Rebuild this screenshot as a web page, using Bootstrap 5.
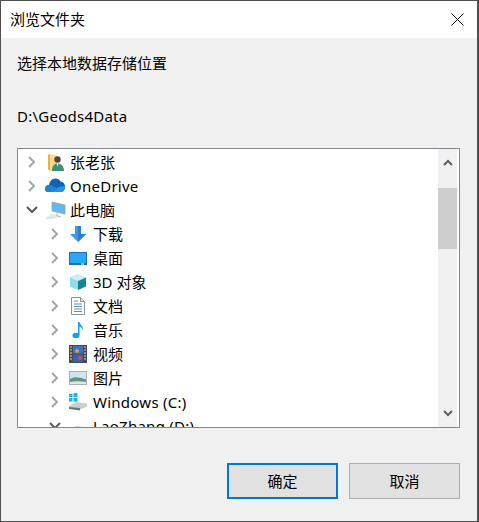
<!DOCTYPE html>
<html lang="zh-CN">
<head>
    <meta charset="UTF-8">
    <title>浏览文件夹</title>
    <link href="https://cdn.jsdelivr.net/npm/bootstrap@5.3.0/dist/css/bootstrap.min.css" rel="stylesheet">
    <style>
        html, body { height: 522px; overflow: hidden; }
        body { font-family: "Noto Sans", "Noto Sans CJK SC", sans-serif; font-size: 15px; color: #000; background: #f0f0f0; }
        .dlg-window { width: 479px; height: 522px; background: #f0f0f0; border: 1px solid #4f4f4f; border-right-width: 2px; }
        .dlg-title { height: 37px; background: #fff; padding-left: 9px; line-height: 36px; }
        .dlg-close { width: 32px; height: 37px; margin-right: 4px; }
        .dlg-caption { margin: 15px 0 0 16px; height: 20px; line-height: 20px; }
        .dlg-path { margin: 33px 0 0 16px; height: 20px; line-height: 20px; }
        .latin-text { letter-spacing: .25px; }
        .tree-box { margin: 22px 0 0 16px; width: 443px; height: 280px; border: 1px solid #828790; background: #fff; }
        .tree-list { height: 278px; overflow: hidden; padding-top: 1px; }
        .tree-row { height: 24px; line-height: 24px; white-space: nowrap; }
        .tree-sub { padding-left: 23px; }
        .tree-arrow { width: 29px; flex: none; padding-left: 8px; }
        .tree-icon { width: 18px; height: 18px; flex: none; margin-left: -1px; margin-right: 6px; overflow: visible; }
        .tree-scroll { width: 21px; flex: none; padding-right: 2px; }
        .tree-track { width: 19px; height: 100%; background: #f0f0f0; }
        .tree-btn { height: 19px; }
        .tree-gap { height: 16px; }
        .tree-thumb { height: 61px; background: #cdcdcd; }
        .dlg-actions { margin: 35px 0 0 226px; gap: 11px; }
        .dlg-btn { width: 111px; height: 36px; padding: 0; font-size: 15px; color: #000; background: #e1e1e1; border: 1px solid #adadad; border-radius: 0; }
        .dlg-btn-main { border: 2px solid #0078d7; }
    </style>
</head>
<body>
    <svg width="0" height="0" class="position-absolute">
        <symbol id="arrow-r" viewBox="0 0 10 12"><path d="M3 1l5 5-5 5" fill="none" stroke="#a6a6a6" stroke-width="2"/></symbol>
        <symbol id="arrow-d" viewBox="0 0 12 10"><path d="M1 2l5 5 5-5" fill="none" stroke="#595959" stroke-width="2"/></symbol>
    </svg>

    <div class="dlg-window">
        <!-- Title bar -->
        <div class="dlg-title d-flex justify-content-between">
            <span>浏览文件夹</span>
            <div class="dlg-close d-flex align-items-center justify-content-center">
                <svg width="13" height="13" viewBox="0 0 13 13"><path d="M.5.5l12 12M12.5.5l-12 12" stroke="#000" stroke-width="1" fill="none"/></svg>
            </div>
        </div>

        <div class="dlg-caption">选择本地数据存储位置</div>
        <div class="dlg-path latin-text">D:\Geods4Data</div>

        <!-- Folder tree -->
        <div class="tree-box d-flex">
            <div class="tree-list flex-grow-1">
                <div class="tree-row d-flex align-items-center">
                    <span class="tree-arrow d-flex"><svg width="10" height="12"><use href="#arrow-r"/></svg></span>
                    <svg class="tree-icon" viewBox="0 0 18 18"><path d="M2 1l9 1.500V18H4l-2-2z" fill="#f6d98a"/><path d="M2 1l2 1v16l-2-2z" fill="#e3b34a"/><circle cx="11.500" cy="6.500" r="3.200" fill="#5b4030"/><path d="M6 18c0-5 2-7.500 5.500-7.500S18 13 18 18z" fill="#3f9270"/><path d="M10.500 10.500h2l-1 3z" fill="#fff"/></svg>
                    <span>张老张</span>
                </div>
                <div class="tree-row d-flex align-items-center">
                    <span class="tree-arrow d-flex"><svg width="10" height="12"><use href="#arrow-r"/></svg></span>
                    <svg class="tree-icon" viewBox="0 0 18 18"><path d="M2 15C0 15-1 13.300-1 11.700-1 9.500.7 8 3 8c.6-3.700 3.200-6.500 6.500-6.500 2.300 0 4 1.200 5 3 2.700.2 4.500 2.200 4.500 5 0 3.500-1.500 5.500-4 5.500z" fill="#0f62b5"/><path d="M2 15C0 15-1 13.300-1 11.700-1 9.500.7 8 3 8c3 0 5 1 7 3l4 4z" fill="#1b86d8"/><path d="M7 15l4-4c2.500-1.800 5.500-2 8-1.500 0 3.500-1.500 5.500-4 5.500z" fill="#1f97e6"/></svg>
                    <span class="latin-text">OneDrive</span>
                </div>
                <div class="tree-row d-flex align-items-center">
                    <span class="tree-arrow d-flex"><svg width="12" height="10"><use href="#arrow-d"/></svg></span>
                    <svg class="tree-icon" viewBox="0 0 18 18"><path d="M6 1l13 3v9L6 10z" fill="#62b9ee" stroke="#8fa3b3" stroke-width=".8"/><path d="M-1 18l6-5 9 1.500-6 3.500z" fill="#e3e6e8"/><path d="M11 12v3l4 1" fill="none" stroke="#b5bcc2"/></svg>
                    <span>此电脑</span>
                </div>
                <div class="tree-row tree-sub d-flex align-items-center">
                    <span class="tree-arrow d-flex"><svg width="10" height="12"><use href="#arrow-r"/></svg></span>
                    <svg class="tree-icon" viewBox="0 0 18 18"><path d="M6 1h6v8h5l-8 8-8-8h5z" fill="#3f97e6"/><path d="M9 1h3v8h5l-8 8z" fill="#2a7fd0"/></svg>
                    <span>下载</span>
                </div>
                <div class="tree-row tree-sub d-flex align-items-center">
                    <span class="tree-arrow d-flex"><svg width="10" height="12"><use href="#arrow-r"/></svg></span>
                    <svg class="tree-icon" viewBox="0 0 18 18"><rect x="0" y="3" width="18" height="13" fill="#1b6fb8"/><rect x="1" y="4" width="16" height="10" fill="#29a8f2"/><rect x="12" y="14.500" width="3" height="1" fill="#fff"/></svg>
                    <span>桌面</span>
                </div>
                <div class="tree-row tree-sub d-flex align-items-center">
                    <span class="tree-arrow d-flex"><svg width="10" height="12"><use href="#arrow-r"/></svg></span>
                    <svg class="tree-icon" viewBox="0 0 18 18"><path d="M9 1L1 4.500v9L9 17z" fill="#8fdde8"/><path d="M1 4.500L9 8l8-3.500L9 1z" fill="#c9f1f5"/><path d="M9 8v9l8-3.500v-9z" fill="#17839c"/></svg>
                    <span>3D 对象</span>
                </div>
                <div class="tree-row tree-sub d-flex align-items-center">
                    <span class="tree-arrow d-flex"><svg width="10" height="12"><use href="#arrow-r"/></svg></span>
                    <svg class="tree-icon" viewBox="0 0 18 18"><path d="M2.500.5h9l4 4v13h-13z" fill="#fff" stroke="#8a9299"/><path d="M11.500.5v4h4" fill="#dfe4e8" stroke="#8a9299"/><path d="M5 4h4M5 7h8M5 9.500h8M5 12h8M5 14.500h8" stroke="#5c8fb3"/></svg>
                    <span>文档</span>
                </div>
                <div class="tree-row tree-sub d-flex align-items-center">
                    <span class="tree-arrow d-flex"><svg width="10" height="12"><use href="#arrow-r"/></svg></span>
                    <svg class="tree-icon" viewBox="0 0 18 18"><ellipse cx="7" cy="14.500" rx="3.500" ry="2.800" fill="#1c9be8"/><path d="M9 1h1.500c.5 3 4 4 3.500 8-.7-2-2-3-3.500-3.500V14H9z" fill="#1c9be8"/></svg>
                    <span>音乐</span>
                </div>
                <div class="tree-row tree-sub d-flex align-items-center">
                    <span class="tree-arrow d-flex"><svg width="10" height="12"><use href="#arrow-r"/></svg></span>
                    <svg class="tree-icon" viewBox="0 0 18 18"><rect width="18" height="18" fill="#4a4a4a"/><rect x="4" y="1" width="10" height="7.500" fill="#3d6fc4"/><rect x="4" y="9.500" width="10" height="7.500" fill="#2f62b8"/><circle cx="8" cy="6" r="2" fill="#e0a030"/><circle cx="11" cy="13" r="2" fill="#d0503a"/><path d="M1.500 2h1M1.500 5h1M1.500 8h1M1.500 11h1M1.500 14h1M15.500 2h1M15.500 5h1M15.500 8h1M15.500 11h1M15.500 14h1" stroke="#fff" stroke-width="1.500"/></svg>
                    <span>视频</span>
                </div>
                <div class="tree-row tree-sub d-flex align-items-center">
                    <span class="tree-arrow d-flex"><svg width="10" height="12"><use href="#arrow-r"/></svg></span>
                    <svg class="tree-icon" viewBox="0 0 18 18"><rect y="2" width="18" height="14" fill="#a9b0b5"/><rect x="1" y="3" width="16" height="12" fill="#cfe4f2"/><path d="M1 10c4-2.500 8-2 16 .5V15H1z" fill="#5f9488"/><path d="M1 13c5-1 10-1 16 0v2H1z" fill="#e0ead8"/></svg>
                    <span>图片</span>
                </div>
                <div class="tree-row tree-sub d-flex align-items-center">
                    <span class="tree-arrow d-flex"><svg width="10" height="12"><use href="#arrow-r"/></svg></span>
                    <svg class="tree-icon" viewBox="0 0 18 18"><path d="M0 1l3.500-.5V4H0zM4.500.3L8.500 0v4h-4zM0 5h3.500v3.500H0zM4.500 5h4v3.800l-4-.3z" fill="#19b4ee"/><path d="M0 13l7-4 11 1.500v3l-7 3-11-1z" fill="#c9ced2"/><path d="M0 14l11 1v2.500L0 16z" fill="#6e7478"/></svg>
                    <span class="latin-text">Windows (C:)</span>
                </div>
                <div class="tree-row tree-sub d-flex align-items-center">
                    <span class="tree-arrow d-flex"><svg width="12" height="10"><use href="#arrow-d"/></svg></span>
                    <svg class="tree-icon" viewBox="0 0 18 18"><path d="M0 13l7-4 11 1.500v3l-7 3-11-1z" fill="#c9ced2"/></svg>
                    <span class="latin-text">LaoZhang (D:)</span>
                </div>
            </div>
            <div class="tree-scroll">
                <div class="tree-track d-flex flex-column">
                    <div class="tree-btn d-flex align-items-center justify-content-center mt-1"><svg width="10" height="7" viewBox="0 0 10 7"><path d="M1 6l4-4 4 4" fill="none" stroke="#606060" stroke-width="2"/></svg></div>
                    <div class="tree-gap"></div>
                    <div class="tree-thumb"></div>
                    <div class="flex-grow-1"></div>
                    <div class="tree-btn d-flex align-items-center justify-content-center mb-1"><svg width="10" height="7" viewBox="0 0 10 7"><path d="M1 1l4 4 4-4" fill="none" stroke="#606060" stroke-width="2"/></svg></div>
                </div>
            </div>
        </div>

        <!-- Buttons -->
        <div class="dlg-actions d-flex">
            <button type="button" class="btn dlg-btn dlg-btn-main">确定</button>
            <button type="button" class="btn dlg-btn">取消</button>
        </div>
    </div>
</body>
</html>
